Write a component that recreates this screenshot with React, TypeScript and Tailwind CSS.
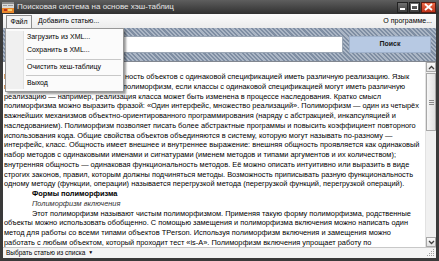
import React from "react";

const lines: { text: string; kind?: "bold" | "italic" | "indent" }[] = [
  { text: "программирования поддерживает полиморфизм, если классы с одинаковой спецификацией могут иметь различную" },
  { text: "реализацию — например, реализация класса может быть изменена в процессе наследования. Кратко смысл" },
  { text: "полиморфизма можно выразить фразой: «Один интерфейс, множество реализаций». Полиморфизм — один из четырёх" },
  { text: "важнейших механизмов объектно-ориентированного программирования (наряду с абстракцией, инкапсуляцией и" },
  { text: "наследованием). Полиморфизм позволяет писать более абстрактные программы и повысить коэффициент повторного" },
  { text: "использования кода. Общие свойства объектов объединяются в систему, которую могут называть по-разному —" },
  { text: "интерфейс, класс. Общность имеет внешнее и внутреннее выражение: внешняя общность проявляется как одинаковый" },
  { text: "набор методов с одинаковыми именами и сигнатурами (именем методов и типами аргументов и их количеством);" },
  { text: "внутренняя общность — одинаковая функциональность методов. Её можно описать интуитивно или выразить в виде" },
  { text: "строгих законов, правил, которым должны подчиняться методы. Возможность приписывать разную функциональность" },
  { text: "одному методу (функции, операции) называется перегрузкой метода (перегрузкой функций, перегрузкой операций)." },
  { text: "Формы полиморфизма", kind: "bold" },
  { text: "Полиморфизм включения", kind: "italic" },
  { text: "Этот полиморфизм называют чистым полиморфизмом. Применяя такую форму полиморфизма, родственные", kind: "indent" },
  { text: "объекты можно использовать обобщенно. С помощью замещения и полиморфизма включения можно написать один" },
  { text: "метод для работы со всеми типами объектов TPerson. Используя полиморфизм включения и замещения можно" },
  { text: "работать с любым объектом, который проходит тест «is-A». Полиморфизм включения упрощает работу по" },
];

const AppIcon = () => (
  <svg width="12" height="11" viewBox="0 0 12 11">
    <rect x="0" y="0" width="12" height="11" fill="#d9d9d9" />
    <rect x="0" y="0" width="12" height="2" fill="#8d8d8d" />
    <rect x="1" y="3" width="4" height="1" fill="#9a9a9a" />
    <rect x="6" y="3" width="5" height="1" fill="#9a9a9a" />
    <rect x="0" y="6" width="12" height="5" fill="#e8872c" />
    <rect x="2" y="7" width="3" height="2" fill="#c0301c" />
    <rect x="6" y="7" width="4" height="2" fill="#f6d06a" />
  </svg>
);

const WinButtons = () => (
  <div className="flex items-center gap-[1px]">
    <div className="w-[11px] h-[11px] bg-[linear-gradient(#707070,#3c3c3c)] border border-[#222] flex items-end justify-center pb-[2px]">
      <div className="w-[5px] h-[2px] bg-white" />
    </div>
    <div className="w-[11px] h-[11px] bg-[linear-gradient(#707070,#3c3c3c)] border border-[#222] flex items-center justify-center">
      <div className="w-[7px] h-[6px] border border-white border-t-2" />
    </div>
    <div className="w-[15px] h-[11px] bg-[linear-gradient(#ec6a48,#c0331a)] border border-[#5a1a10] flex items-center justify-center">
      <svg width="9" height="8" viewBox="0 0 9 8">
        <path d="M1 1 L8 7 M8 1 L1 7" stroke="white" strokeWidth="1.8" />
      </svg>
    </div>
  </div>
);

const ScrollBar = () => (
  <div className="w-[11px] flex flex-col bg-[#f0f0f0] border-l border-[#e2e2e2]">
    <div className="h-[10px] border border-[#a8a8a8] bg-[linear-gradient(#fafafa,#e2e2e2)] flex items-center justify-center">
      <svg width="7" height="5" viewBox="0 0 7 5"><path d="M1 4 L3.5 1.5 L6 4" stroke="#404040" strokeWidth="1.3" fill="none" /></svg>
    </div>
    <div className="h-[58px] mt-[1px] border border-[#a8a8a8] bg-[linear-gradient(90deg,#f6f6f6,#e0e0e0)] flex flex-col items-center justify-center gap-[1px]">
      <div className="w-[5px] h-px bg-[#8a8a8a]" />
      <div className="w-[5px] h-px bg-[#8a8a8a]" />
      <div className="w-[5px] h-px bg-[#8a8a8a]" />
    </div>
    <div className="flex-1" />
    <div className="h-[10px] border border-[#a8a8a8] bg-[linear-gradient(#fafafa,#e2e2e2)] flex items-center justify-center">
      <svg width="7" height="5" viewBox="0 0 7 5"><path d="M1 1 L3.5 3.5 L6 1" stroke="#404040" strokeWidth="1.3" fill="none" /></svg>
    </div>
  </div>
);

export default function App() {
  return (
    <div className="relative w-[439px] h-[261px] overflow-hidden bg-[#3a3a3a] flex flex-col [font-family:'Liberation_Sans',Arial,sans-serif]">
      {/* title bar */}
      <div className="h-[14px] flex items-center pl-[2px] pr-[3px] bg-[linear-gradient(#5e5e5e,#303030)]">
        <AppIcon />
        <span className="ml-[3px] text-[8px] text-[#e6e6e6] leading-none">Поисковая система на основе хэш-таблиц</span>
        <div className="flex-1" />
        <WinButtons />
      </div>

      <div className="flex-1 mx-[3px] mb-[3px] flex flex-col bg-white min-h-0">
        {/* menu bar */}
        <div className="h-[14px] flex items-end bg-[linear-gradient(#fbfbfb,#ececec)] text-[7px] text-black">
          <div className="ml-[3px] w-[26px] h-[13px] flex items-center justify-center border border-b-0 border-[#8e8e8e] bg-[#f4f4f4]">Файл</div>
          <div className="ml-[6px] h-[13px] flex items-center">Добавить статью...</div>
          <div className="flex-1" />
          <div className="h-[13px] pr-[4px] flex items-center">О программе...</div>
        </div>

        {/* search panel */}
        <div className="h-[33px] flex items-center pl-[5px] pr-[5px] bg-[repeating-linear-gradient(45deg,#7f8ea3_0px,#7f8ea3_1.5px,#abb6c5_1.5px,#abb6c5_3px)]">
          <div className="w-[335px] h-[17px] bg-white border border-[#9ba6b4]" />
          <div className="ml-[6px] flex-1 h-[17px] bg-[#b7c9e3] border border-[#9fb1cb] flex items-center justify-center text-[7px] font-bold text-[#1a1a1a]">
            Поиск
          </div>
        </div>

        {/* text area */}
        <div className="flex-1 min-h-0 flex border-t border-[#828790]">
          <div className="flex-1 overflow-hidden pl-[1px] pt-[10px] text-[7.4px] leading-[9.76px] text-black">
            <div className="whitespace-nowrap">
              <span className="inline-block w-[121px] overflow-hidden align-top">Полиморфизм — возмож</span>
              ность объектов с одинаковой спецификацией иметь различную реализацию. Язык
            </div>
            {lines.map((l, i) => (
              <div
                key={i}
                className={
                  "whitespace-nowrap " +
                  (l.kind === "bold"
                    ? "pl-[28px] font-bold"
                    : l.kind === "italic"
                    ? "pl-[28px] italic text-[#333]"
                    : l.kind === "indent"
                    ? "pl-[28px]"
                    : "")
                }
              >
                {l.text}
              </div>
            ))}
          </div>
          <ScrollBar />
        </div>

        {/* status strip */}
        <div className="h-[11px] flex items-center border-t border-[#c8c8c8] bg-[#f4f4f4] pl-[3px] text-[6.5px] text-black">
          <span>Выбрать статью из списка</span>
          <span className="ml-[3px] text-[5px]">▼</span>
          <div className="flex-1" />
          <svg width="8" height="8" viewBox="0 0 8 8" className="mr-[1px]">
            <rect x="6" y="0" width="1" height="1" fill="#a0a0a0" />
            <rect x="4" y="2" width="1" height="1" fill="#a0a0a0" />
            <rect x="6" y="2" width="1" height="1" fill="#a0a0a0" />
            <rect x="2" y="4" width="1" height="1" fill="#a0a0a0" />
            <rect x="4" y="4" width="1" height="1" fill="#a0a0a0" />
            <rect x="6" y="4" width="1" height="1" fill="#a0a0a0" />
            <rect x="0" y="6" width="1" height="1" fill="#a0a0a0" />
            <rect x="2" y="6" width="1" height="1" fill="#a0a0a0" />
            <rect x="4" y="6" width="1" height="1" fill="#a0a0a0" />
            <rect x="6" y="6" width="1" height="1" fill="#a0a0a0" />
          </svg>
        </div>
      </div>

      {/* File dropdown */}
      <div className="absolute left-[5px] top-[28px] w-[119px] border border-[#979797] bg-[#fbfbfb] shadow-[2px_2px_2px_rgba(0,0,0,0.4)] py-[2px] text-[7px] text-black flex">
        <div className="w-[18px] bg-[#f0f0f0] border-r border-[#e0e0e0]" />
        <div className="flex-1 flex flex-col">
          <div className="h-[13px] flex items-center pl-[3px]">Загрузить из XML...</div>
          <div className="h-[13px] flex items-center pl-[3px]">Сохранить в XML...</div>
          <div className="h-[4px] flex items-center pl-[2px] pr-[2px]"><div className="h-px w-full bg-[#c8c8c8]" /></div>
          <div className="h-[12px] flex items-center pl-[3px]">Очистить хеш-таблицу</div>
          <div className="h-[4px] flex items-center pl-[2px] pr-[2px]"><div className="h-px w-full bg-[#c8c8c8]" /></div>
          <div className="h-[12px] flex items-center pl-[3px]">Выход</div>
        </div>
      </div>
    </div>
  );
}
